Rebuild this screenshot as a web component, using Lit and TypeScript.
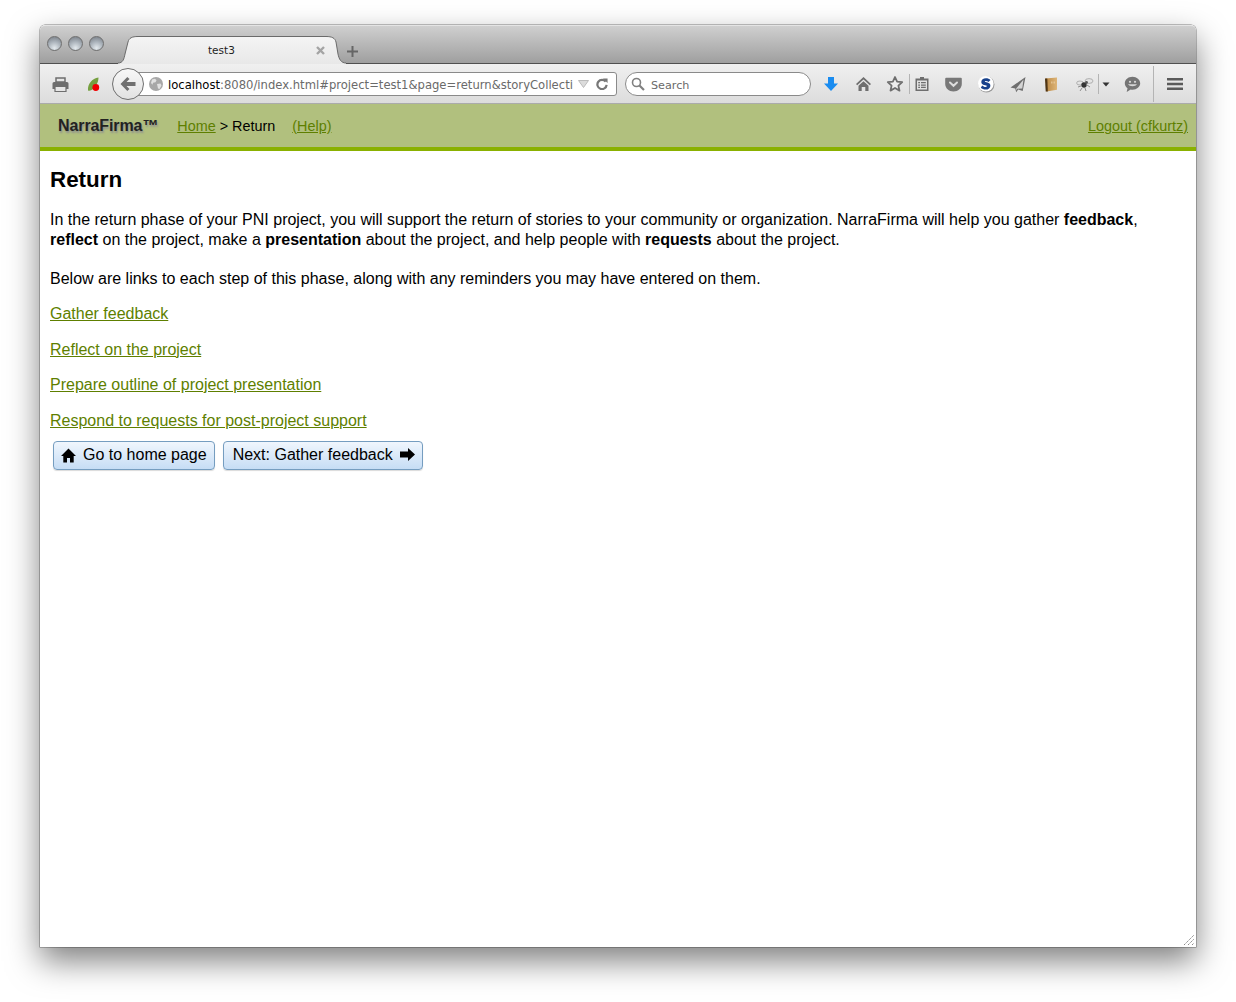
import { LitElement, css, html, svg } from "lit";
import { customElement } from "lit/decorators.js";

const GREY = "#6e6e6e";

const icons = {
  download: svg`<svg width="16" height="16" viewBox="0 0 16 16"><path d="M5 1h6v6.500h4L8 15 1 7.500h4z" fill="#1a8cf0"/></svg>`,
  home: svg`<svg width="17" height="16" viewBox="0 0 17 16"><path d="M8.500 1L1 8l1.200 1.200L8.500 3.600l6.300 5.600L16 8z" fill="${GREY}"/><path d="M3.500 9.800L8.500 5.300l5 4.500V15h-3.200v-4H6.700v4H3.500z" fill="${GREY}"/></svg>`,
  star: svg`<svg width="18" height="18" viewBox="0 0 18 18"><path d="M9 2l2.100 4.700 5.100.5-3.800 3.400 1.100 5L9 13l-4.500 2.600 1.100-5-3.800-3.400 5.100-.5z" fill="#ececec" stroke="${GREY}" stroke-width="1.800" stroke-linejoin="round"/></svg>`,
  clipboard: svg`<svg width="16" height="16" viewBox="0 0 16 16"><path d="M6 2.500V1h4v1.500h4.500V15h-13V2.500z" fill="${GREY}"/><path d="M3 4.500h10v9H3z" fill="#e2e2e2"/><path d="M4.200 6h1.800v1.300H4.200zM7 6h4.800v1.300H7zM4.200 8.400h1.800v1.300H4.200zM7 8.400h4.800v1.300H7zM4.200 10.800h1.800v1.300H4.200zM7 10.800h4.800v1.300H7z" fill="${GREY}"/></svg>`,
  pocket: svg`<svg width="17" height="15" viewBox="0 0 17 15"><path d="M1.200 .8h14.600a1 1 0 0 1 1 1V7c0 4-3.700 7.500-8.300 7.500S.2 11 .2 7V1.800a1 1 0 0 1 1-1z" fill="#787878"/><path d="M5 5.500l3.500 3.300L12 5.500" fill="none" stroke="#dedede" stroke-width="2" stroke-linecap="round"/></svg>`,
  sogou: svg`<svg width="18" height="18" viewBox="0 0 18 18"><circle cx="9.500" cy="9.500" r="8" fill="#9a9a9a"/><circle cx="8.800" cy="8.800" r="7.800" fill="#fff"/><path d="M13.500 5C12.400 3.800 10.800 3.200 9 3.200 6.200 3.200 4.300 4.700 4.300 7c0 3.900 5.700 2.700 5.700 4.100 0 .5-.6.800-1.400.8-1.300 0-2.500-.7-3.400-1.500l-1.400 2.400c1.200 1.100 3 1.800 4.800 1.800 2.900 0 4.800-1.500 4.800-3.900 0-3.900-5.700-2.900-5.700-4.100 0-.4 .5-.7 1.100-.7 1 0 2 .4 2.700 1z" fill="#17418c"/></svg>`,
  plane: svg`<svg width="16" height="17" viewBox="0 0 16 17"><path d="M15.500 1L.5 11.500l4.700 1.100 1 3.600 2-2.700 4.500 1.500z" fill="${GREY}"/><path d="M13.500 3.500L6.200 12.500l.4 2 .7-1.700 5-.3z" fill="#d4d4d4"/></svg>`,
  book: svg`<svg width="14" height="15" viewBox="0 0 14 15"><defs><linearGradient id="bookfill" x1="0" y1="0" x2="1" y2="0"><stop offset="0" stop-color="#b98743"/><stop offset="1" stop-color="#deb578"/></linearGradient></defs><path d="M1.500 1.500L13 .5v12.300L2.500 14.500z" fill="url(#bookfill)"/><path d="M1 1.500h2.300l.5 13L1.700 14.500z" fill="#4e3414"/><path d="M7.500 4.500v2M9 4.500v2M10.500 4.500v2" stroke="#ecd0a4" stroke-width=".7"/></svg>`,
  bug: svg`<svg width="18" height="16" viewBox="0 0 18 16"><ellipse cx="13" cy="5" rx="4" ry="2.400" fill="#e4e4e4" stroke="#999" stroke-width=".7"/><ellipse cx="4" cy="7" rx="3.400" ry="2" fill="#e4e4e4" stroke="#999" stroke-width=".7"/><circle cx="8" cy="9" r="2.700" fill="#333"/><circle cx="10.500" cy="6.500" r="1.400" fill="#555"/><path d="M6 12l-2 3M9 12l1 3M11 9l3 2M5 10l-3 1" stroke="#777" stroke-width=".8"/></svg>`,
  caret: svg`<svg width="8" height="5" viewBox="0 0 8 5"><path d="M.5 .5h7L4 4.500z" fill="#333"/></svg>`,
  chat: svg`<svg width="17" height="17" viewBox="0 0 17 17"><path d="M8.500 .8C4.200 .8 .8 3.700 .8 7.300c0 2 1 3.800 2.700 5l-.8 3.700 4-2.500c.6 .1 1.200 .2 1.800 .2 4.300 0 7.700-2.900 7.700-6.400S12.800 .8 8.500 .8z" fill="#757575"/><circle cx="6" cy="5.800" r="1.100" fill="#d8d8d8"/><circle cx="11" cy="5.800" r="1.100" fill="#d8d8d8"/><path d="M4 8.300c1.200 2.600 7.800 2.600 9 0z" fill="#d8d8d8"/></svg>`,
  menu: svg`<svg width="16" height="14" viewBox="0 0 16 14"><path d="M.5 1h15a1 1 0 0 1 0 2.400H.5a1 1 0 0 1 0-2.400zM.5 5.800h15a1 1 0 0 1 0 2.400H.5a1 1 0 0 1 0-2.400zM.5 10.600h15a1 1 0 0 1 0 2.400H.5a1 1 0 0 1 0-2.400z" fill="#5a5a5a"/></svg>`,
};

const rightTools = [
  { ml: 4, w: 32, icon: icons.download },
  { ml: 0, w: 32, icon: icons.home },
  { ml: 2, w: 28, icon: icons.star },
  { ml: 0, w: 1, sep: true },
  { ml: 0, w: 24, icon: icons.clipboard },
  { ml: 0, w: 38, icon: icons.pocket },
  { ml: 0, w: 28, icon: icons.sogou },
  { ml: 0, w: 36, icon: icons.plane },
  { ml: 0, w: 30, icon: icons.book },
  { ml: 6, w: 26, icon: icons.bug },
  { ml: 0, w: 1, sep: true },
  { ml: 0, w: 14, icon: icons.caret },
  { ml: 0, w: 38, icon: icons.chat },
  { ml: 2, w: 1, sep: true, tall: true },
  { ml: 0, w: 42, icon: icons.menu },
];

@customElement("app-root")
export class AppRoot extends LitElement {
  render() {
    return html`
      <div class="window">
        <div class="titlebar">
          <div class="lights">
            <span class="light"></span><span class="light"></span><span class="light"></span>
          </div>
          <div class="tab">
            <svg class="tab-shape" width="228" height="28" viewBox="0 0 228 28">
              <defs>
                <linearGradient id="tabfill" x1="0" y1="0" x2="0" y2="1">
                  <stop offset="0" stop-color="#f4f4f4" />
                  <stop offset="1" stop-color="#e8e8e8" />
                </linearGradient>
              </defs>
              <path d="M0 27C5 27 6 23 7 18L10 6C11 2 14 .5 20 .5H208C214 .5 217 2 218 6L220 18C221 23 223 27 228 27V28H0z" fill="url(#tabfill)" />
              <path d="M0 27C5 27 6 23 7 18L10 6C11 2 14 .5 20 .5H208C214 .5 217 2 218 6L220 18C221 23 223 27 228 27" fill="none" stroke="#6a6a6a" stroke-width="1" />
            </svg>
            <span class="tab-title">test3</span>
            <svg class="tab-close" width="9" height="9" viewBox="0 0 9 9"><path d="M1 1l7 7M8 1L1 8" stroke="#a4a4a4" stroke-width="2.400" /></svg>
          </div>
          <svg class="newtab" width="11" height="11" viewBox="0 0 11 11"><path d="M5.500 0v11M0 5.500h11" stroke="#666" stroke-width="2" /></svg>
        </div>

        <div class="toolbar">
          <span class="slot print">
            <svg width="17" height="15" viewBox="0 0 17 15">
              <path d="M4 1h9v4H4z" fill="#e6e6e6" stroke="${GREY}" stroke-width="1.500" />
              <path d="M2 5h13a1.500 1.500 0 0 1 1.500 1.500V12H.5V6.500A1.500 1.500 0 0 1 2 5z" fill="${GREY}" />
              <path d="M3 9.500h11v5H3z" fill="#e6e6e6" stroke="${GREY}" stroke-width="1.200" />
            </svg>
          </span>
          <span class="slot leaf">
            <svg width="15" height="15" viewBox="0 0 15 15">
              <path d="M1 13.500C.5 7 5 1.500 11.500 .5c0 3-1 6-3 8.500s-4 5.500-7.500 4.500z" fill="#76a040" />
              <circle cx="8.800" cy="10.500" r="3.400" fill="#f00000" />
            </svg>
          </span>
          <span class="back">
            <svg width="18" height="16" viewBox="0 0 18 16">
              <path d="M8.300 1L1.500 8l6.800 7 2.200-2.100-3-3H16.500V6.100H7.500l3-3z" fill="#707070" />
            </svg>
          </span>
          <div class="url">
            <svg class="globe" width="14" height="14" viewBox="0 0 14 14">
              <circle cx="7" cy="7" r="7" fill="#a8a8a8" />
              <path d="M3 2.500l3-.8 1.500 1.500-1 2-2.500 .5-.5 2L2 6zM8 7l3.500-.5 1 2-2 3.500-1.500-.5z" fill="#e2e2e2" />
            </svg>
            <span class="url-text"><span class="host">localhost</span>:8080/index.html#project=test1&amp;page=return&amp;storyCollecti</span>
            <svg class="drop" width="11" height="8" viewBox="0 0 11 8"><path d="M.5 .5h10L5.500 7.500z" fill="#dcdcdc" stroke="#bbb" /></svg>
            <svg class="reload" width="12" height="12" viewBox="0 0 13 13">
              <path d="M10.500 4A5 5 0 1 0 11.500 7.500" fill="none" stroke="#777" stroke-width="2.400" />
              <path d="M7.500 .5h5v5z" fill="#777" />
            </svg>
          </div>
          <div class="search">
            <svg width="14" height="14" viewBox="0 0 14 14">
              <circle cx="5.500" cy="5.500" r="4" fill="none" stroke="#808080" stroke-width="1.600" />
              <path d="M8.500 8.500l4.500 4.500" stroke="#808080" stroke-width="2.200" />
            </svg>
            <span class="search-text">Search</span>
          </div>
          ${rightTools.map((t) =>
            t.sep
              ? html`<span class="sep ${t.tall ? "tall" : ""}" style="margin-left:${t.ml}px"></span>`
              : html`<span class="slot" style="margin-left:${t.ml}px;width:${t.w}px">${t.icon}</span>`
          )}
        </div>

        <header class="appbar">
          <span class="brand">NarraFirma™</span>
          <span class="crumbs"><a href="#">Home</a> &gt; Return</span>
          <a class="help" href="#">(Help)</a>
          <a class="logout" href="#">Logout (cfkurtz)</a>
        </header>

        <main class="page">
          <h1>Return</h1>
          <p class="intro">
            In the return phase of your PNI project, you will support the return of stories to your community or organization. NarraFirma will help you gather <b>feedback</b>, <b>reflect</b> on the project, make a <b>presentation</b> about the project, and help people with <b>requests</b> about the project.
          </p>
          <p class="below">Below are links to each step of this phase, along with any reminders you may have entered on them.</p>
          <div class="links">
            <a href="#">Gather feedback</a>
            <a href="#">Reflect on the project</a>
            <a href="#">Prepare outline of project presentation</a>
            <a href="#">Respond to requests for post-project support</a>
          </div>
          <div class="buttons">
            <button>
              <svg width="15" height="15" viewBox="0 0 15 15"><path d="M7.500 .5L0 8h2.300v6.500h3.700V10h3v4.500h3.700V8H15z" fill="#000" /></svg>
              Go to home page
            </button>
            <button>
              Next: Gather feedback
              <svg width="15" height="14" viewBox="0 0 15 14"><path d="M8 0l7 6.500L8 13V9.500H0v-6h8z" fill="#000" /></svg>
            </button>
          </div>
        </main>

        <svg class="grip" width="12" height="12" viewBox="0 0 12 12">
          <path d="M1 11L11 1M5 11l6-6M9 11l2-2" stroke="#8a8a8a" stroke-width="1" stroke-dasharray="1.500 .7" />
        </svg>
      </div>
    `;
  }

  static styles = css`
    :host {
      display: block;
      height: 1002px;
      box-sizing: border-box;
      padding: 25px 40px 55px;
      background: #fff;
      overflow: hidden;
      font-family: "Liberation Sans", Arial, sans-serif;
    }

    .window {
      position: relative;
      height: 922px;
      display: flex;
      flex-direction: column;
      border-radius: 5px 5px 0 0;
      background: #fff;
      box-shadow: 0 14px 32px rgba(0, 0, 0, 0.5), 0 0 0 0.5px #8a8a8a;
    }

    /* browser chrome */
    .titlebar {
      position: relative;
      flex: none;
      height: 39px;
      box-sizing: border-box;
      border-top: 1px solid #e4e4e4;
      border-bottom: 1px solid #505050;
      border-radius: 5px 5px 0 0;
      background: linear-gradient(#cfcfcf, #9f9f9f);
    }

    .lights {
      display: flex;
      gap: 7px;
      padding: 10px 0 0 7px;
    }

    .light {
      width: 15px;
      height: 15px;
      margin-right: -1px;
      box-sizing: border-box;
      border-radius: 50%;
      border: 1px solid #6f6f6f;
      background: radial-gradient(circle at 50% 85%, #e4eaee, #aab2ba 50%, #727880);
    }

    .tab {
      position: absolute;
      left: 78px;
      top: 10px;
      width: 228px;
      height: 28px;
    }

    .tab-shape {
      position: absolute;
      inset: 0;
      overflow: visible;
    }

    .tab-title {
      position: absolute;
      left: 90px;
      top: 8px;
      font: 10.500px "DejaVu Sans", sans-serif;
      color: #222;
    }

    .tab-close {
      position: absolute;
      left: 198px;
      top: 10px;
    }

    .newtab {
      position: absolute;
      left: 307px;
      top: 20px;
    }

    .toolbar {
      flex: none;
      height: 40px;
      box-sizing: border-box;
      display: flex;
      align-items: center;
      padding-top: 1px;
      border-bottom: 1px solid #ababab;
      background: linear-gradient(#f0f0f0, #dcdcdc);
    }

    .slot {
      flex: none;
      display: flex;
      justify-content: center;
      align-items: center;
    }

    .print {
      width: 40px;
    }

    .leaf {
      width: 28px;
    }

    .back {
      position: relative;
      z-index: 1;
      flex: none;
      width: 32px;
      height: 32px;
      margin-left: 4px;
      box-sizing: border-box;
      border: 1px solid #6f6f6f;
      border-radius: 50%;
      background: linear-gradient(#f8f8f8, #e2e2e2);
      display: flex;
      align-items: center;
      justify-content: center;
    }

    .url,
    .search {
      flex: none;
      height: 24px;
      box-sizing: border-box;
      display: flex;
      align-items: center;
      background: #fff;
      border: 1px solid #8a8a8a;
      font: 11.600px "DejaVu Sans", sans-serif;
      color: #6a6a6a;
    }

    .url {
      width: 487px;
      margin-left: -14px;
      padding: 0 8px 0 18px;
      border-radius: 3px;
    }

    .url-text {
      margin-left: 5px;
      padding-top: 2px;
      white-space: nowrap;
    }

    .host {
      color: #000;
    }

    .drop {
      margin-left: auto;
    }

    .reload {
      margin-left: 7px;
    }

    .search {
      width: 186px;
      margin-left: 8px;
      padding-left: 5px;
      gap: 6px;
      border-radius: 12px;
    }

    .search-text {
      padding-top: 2px;
      font-size: 11.200px;
    }

    .sep {
      flex: none;
      width: 1px;
      height: 20px;
      background: #b4b4b4;
    }

    .sep.tall {
      height: 36px;
    }

    /* app header */
    .appbar {
      flex: none;
      height: 47px;
      box-sizing: border-box;
      display: flex;
      align-items: center;
      padding: 0 8px 0 18px;
      border-bottom: 4px solid #8ab100;
      background: #b1c07e;
      font-size: 14.400px;
    }

    .brand {
      font-size: 16px;
      letter-spacing: -0.1px;
      font-weight: bold;
      color: #222;
      text-shadow: 1px 2px 2px #8f8f8f;
      margin-right: 19px;
    }

    .crumbs {
      color: #000;
      margin-right: 17px;
    }

    a {
      color: #5e7f00;
      text-decoration: underline;
    }

    .logout {
      margin-left: auto;
    }

    /* page body */
    .page {
      flex: 1;
      padding: 15px 10px 0;
      color: #000;
      font-size: 16px;
      line-height: 20px;
    }

    h1 {
      margin: 0 0 16px;
      font-size: 22.400px;
      line-height: 28px;
      font-weight: bold;
    }

    p {
      margin: 0;
    }

    .below {
      margin-top: 19px;
    }

    .links {
      display: flex;
      flex-direction: column;
      align-items: flex-start;
      gap: 15.500px;
      margin-top: 15px;
    }

    .buttons {
      display: flex;
      gap: 8px;
      margin: 10px 0 0 3px;
    }

    button {
      height: 29px;
      box-sizing: border-box;
      display: flex;
      align-items: center;
      gap: 7px;
      padding: 0 7px;
      font: 16px "Liberation Sans", Arial, sans-serif;
      color: #000;
      border: 1px solid #759dc0;
      border-radius: 4px;
      background: linear-gradient(#f0f6fd, #c6ddf5);
      box-shadow: 0 1px 1px rgba(0, 0, 0, 0.15);
    }

    button + button {
      padding: 0 7px 0 9px;
    }

    .grip {
      position: absolute;
      right: 1px;
      bottom: 1px;
    }
  `;
}
